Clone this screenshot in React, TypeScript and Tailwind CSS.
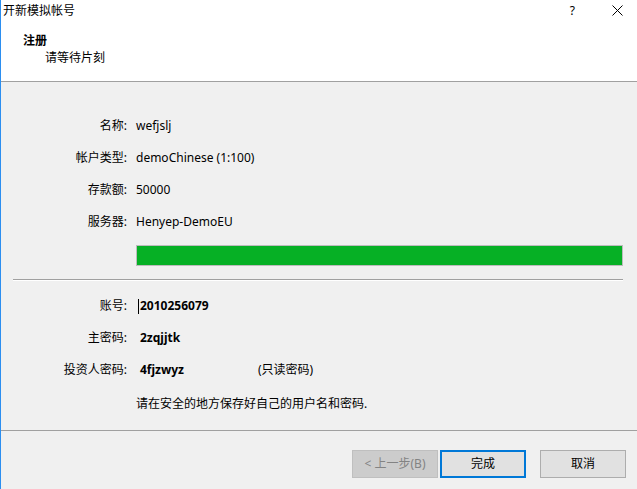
import React from 'react';

const font = { fontFamily: '"Segoe UI", "Noto Sans", "Noto Sans CJK SC", sans-serif' };

type Row = { label: string; value: string; bold?: boolean; extra?: string; caret?: boolean };

const INFO: Row[] = [
  { label: '名称:', value: 'wefjslj' },
  { label: '帐户类型:', value: 'demoChinese (1:100)' },
  { label: '存款额:', value: '50000' },
  { label: '服务器:', value: 'Henyep-DemoEU' },
];

const CREDENTIALS: Row[] = [
  { label: '账号:', value: '2010256079', bold: true, caret: true },
  { label: '主密码:', value: '2zqjjtk', bold: true },
  { label: '投资人密码:', value: '4fjzwyz', bold: true, extra: '(只读密码)' },
];

const InfoRow: React.FC<{ row: Row }> = ({ row }) => (
  <div className="grid grid-cols-[126px_1fr] h-[32px] items-center">
    <div className="text-right text-black">{row.label}</div>
    {row.bold ? (
      <div className="relative flex items-center pl-[13px]">
        {row.caret && <span className="absolute left-[11px] top-[1px] h-[15px] w-px bg-black" />}
        <span className="w-[118px] font-bold text-black">{row.value}</span>
        {row.extra && <span className="text-black">{row.extra}</span>}
      </div>
    ) : (
      <div className="pl-[9px] text-black">{row.value}</div>
    )}
  </div>
);

const App: React.FC = () => {
  return (
    <div
      className="w-[637px] h-[489px] bg-[#f0f0f0] border-l border-[#2b8ef0] flex flex-col text-[12px] leading-[16px] overflow-hidden"
      style={font}
    >
      {/* Header */}
      <div className="h-[82px] bg-white border-b border-[#a0a0a0] flex flex-col">
        <div className="h-[21px] flex items-center justify-between pl-[2px] pr-[14px]">
          <span className="text-black">开新模拟帐号</span>
          <div className="flex items-center gap-[37px]">
            <span className="text-black text-[12px]">?</span>
            <svg width="11" height="11" viewBox="0 0 11 11">
              <path d="M0.5 0.5 L10.5 10.5 M10.5 0.5 L0.5 10.5" stroke="#000" strokeWidth="1" />
            </svg>
          </div>
        </div>
        <div className="pl-[22px] mt-[12px] font-bold text-black">注册</div>
        <div className="pl-[44px] mt-[1px] text-black">请等待片刻</div>
      </div>

      {/* Body */}
      <div className="flex-1 flex flex-col pt-[28px]">
        {INFO.map((r) => (
          <InfoRow key={r.label} row={r} />
        ))}
        <div className="ml-[135px] mr-[14px] mt-[7px] h-[21px] border border-[#bcbcbc] bg-[#06b025]" />
        <div className="ml-[12px] mr-[14px] mt-[13px] border-t border-[#a0a0a0] border-b border-b-white" />
        <div className="mt-[9px]">
          {CREDENTIALS.map((r) => (
            <InfoRow key={r.label} row={r} />
          ))}
        </div>
        <div className="pl-[135px] mt-[10px] text-black">请在安全的地方保存好自己的用户名和密码.</div>
      </div>

      {/* Footer */}
      <div className="h-[59px] border-t border-[#a0a0a0] flex justify-end items-start pt-[19px] pr-[11px]">
        <button className="w-[86px] h-[28px] bg-[#cccccc] border border-[#bfbfbf] text-[#838383]">
          &lt; 上一步(B)
        </button>
        <button className="ml-[2px] w-[86px] h-[28px] bg-[#e1e1e1] border-2 border-[#0078d7] text-black">
          完成
        </button>
        <button className="ml-[14px] w-[86px] h-[28px] bg-[#e1e1e1] border border-[#adadad] text-black">
          取消
        </button>
      </div>
    </div>
  );
};

export default App;
